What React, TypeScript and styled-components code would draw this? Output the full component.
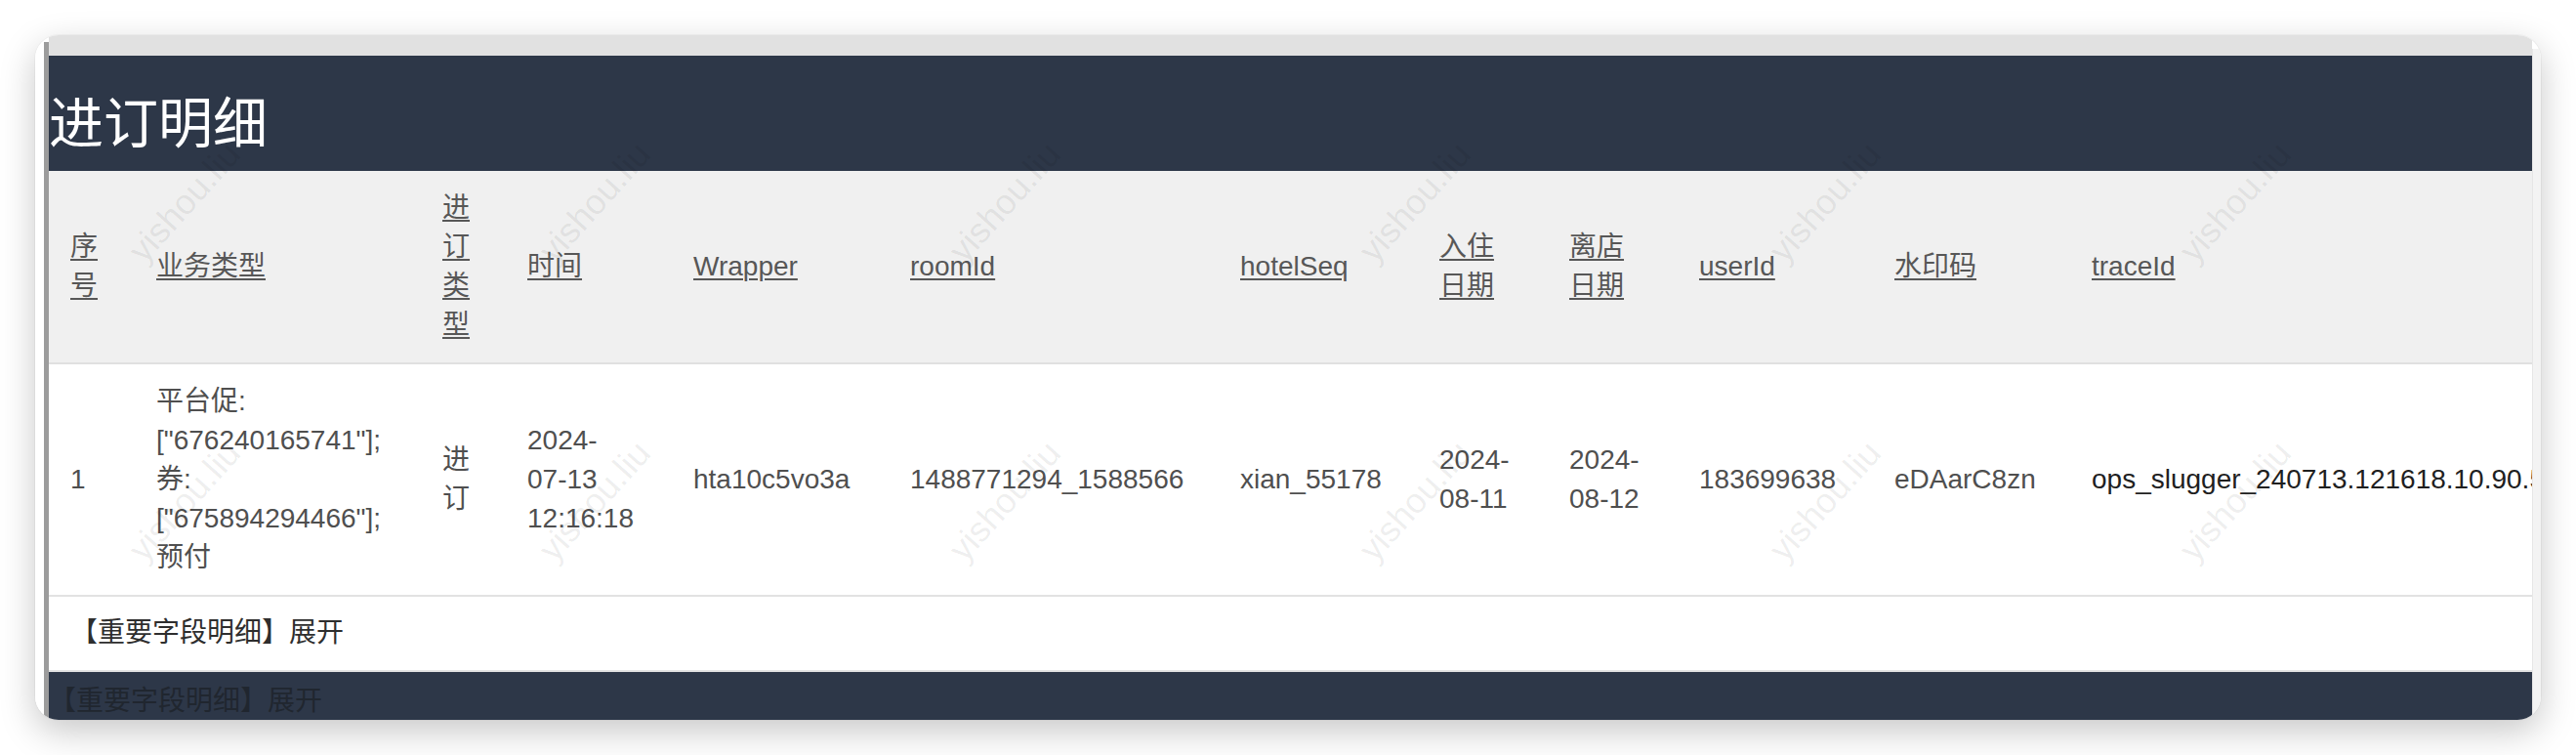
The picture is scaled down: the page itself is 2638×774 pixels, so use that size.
import React from 'react';
import styled, { createGlobalStyle } from 'styled-components';

const GlobalStyle = createGlobalStyle`
  html, body {
    margin: 0;
    padding: 0;
    background: #ffffff;
  }
  body {
    font-family: 'Liberation Sans', 'Noto Sans CJK SC', sans-serif;
  }
`;

type Column = {
    key: string;
    width: number;
    title: string[];
};

const columns: Column[] = [
    { key: 'seq', width: 80, title: ['序', '号'] },
    { key: 'bizType', width: 293, title: ['业务类型'] },
    { key: 'orderType', width: 87, title: ['进', '订', '类', '型'] },
    { key: 'time', width: 170, title: ['时间'] },
    { key: 'wrapper', width: 222, title: ['Wrapper'] },
    { key: 'roomId', width: 338, title: ['roomId'] },
    { key: 'hotelSeq', width: 204, title: ['hotelSeq'] },
    { key: 'checkIn', width: 133, title: ['入住', '日期'] },
    { key: 'checkOut', width: 133, title: ['离店', '日期'] },
    { key: 'userId', width: 200, title: ['userId'] },
    { key: 'watermark', width: 202, title: ['水印码'] },
    { key: 'traceId', width: 720, title: ['traceId'] },
];

const row: Record<string, string[]> = {
    seq: ['1'],
    bizType: ['平台促:', '["676240165741"];', '券:', '["675894294466"];', '预付'],
    orderType: ['进', '订'],
    time: ['2024-', '07-13', '12:16:18'],
    wrapper: ['hta10c5vo3a'],
    roomId: ['1488771294_1588566'],
    hotelSeq: ['xian_55178'],
    checkIn: ['2024-', '08-11'],
    checkOut: ['2024-', '08-12'],
    userId: ['183699638'],
    watermark: ['eDAarC8zn'],
    traceId: ['ops_slugger_240713.121618.10.90.5'],
};

// watermark grid, centers relative to the content column
const marks: { x: number; y: number }[] = [];
for (let r = 0; r < 2; r++) {
    for (let c = 0; c < 6; c++) {
        marks.push({ x: 139 + c * 420, y: 171 + r * 306 });
    }
}

const lines = (items: string[]) =>
    items.map((t, i) => (
        <React.Fragment key={i}>
            {i > 0 && <br />}
            {t}
        </React.Fragment>
    ));

const App = () => {
    const tableWidth = columns.reduce((s, c) => s + c.width, 0);
    return (
        <>
            <GlobalStyle />
            <Stage>
                <Window>
                    <LeftRail />
                    <Main>
                        <TopStrip />
                        <TitleBand>
                            <Title>进订明细</Title>
                        </TitleBand>
                        <Table $width={tableWidth}>
                            <colgroup>
                                {columns.map(c => (
                                    <Col key={c.key} $w={c.width} />
                                ))}
                            </colgroup>
                            <thead>
                                <tr>
                                    {columns.map(c => (
                                        <Th key={c.key}>
                                            <SortLink href="#">{lines(c.title)}</SortLink>
                                        </Th>
                                    ))}
                                </tr>
                            </thead>
                            <tbody>
                                <tr>
                                    {columns.map(c => (
                                        <Td key={c.key} $dark={c.key === 'traceId'}>
                                            {lines(row[c.key])}
                                        </Td>
                                    ))}
                                </tr>
                            </tbody>
                        </Table>
                        <ExpandRow>【重要字段明细】展开</ExpandRow>
                        <Footer>
                            <FooterText>【重要字段明细】展开</FooterText>
                        </Footer>
                        <Watermarks>
                            {marks.map((m, i) => (
                                <Mark key={i} style={{ left: m.x, top: m.y }}>
                                    yishou.liu
                                </Mark>
                            ))}
                        </Watermarks>
                    </Main>
                    <RightRail />
                </Window>
            </Stage>
        </>
    );
};

export default App;

const Stage = styled.div`
    padding: 36px;
    width: 2638px;
    box-sizing: border-box;
`;

const Window = styled.div`
    display: flex;
    width: 2566px;
    border-radius: 24px;
    overflow: hidden;
    background: #ffffff;
    box-shadow: 0 12px 36px rgba(0, 0, 0, 0.22), 0 0 0 1px rgba(0, 0, 0, 0.03);
`;

const LeftRail = styled.div`
    flex: 0 0 9px;
    margin-top: 7px;
    border-right: 5px solid #9c9c9c;
    background: #ffffff;
`;

const RightRail = styled.div`
    flex: 0 0 8px;
    margin-top: 14px;
    background: #f3f3f3;
    border-left: 1px solid #e6e6e6;
`;

const Main = styled.div`
    position: relative;
    flex: 1;
    min-width: 0;
    overflow: hidden;
    display: flex;
    flex-direction: column;
`;

const TopStrip = styled.div`
    height: 21px;
    background: #e1e1e1;
`;

const TitleBand = styled.div`
    background: #2d3748;
    height: 118px;
    box-sizing: border-box;
    padding-top: 42px;
`;

const Title = styled.h3`
    margin: 0;
    font-size: 56px;
    line-height: 56px;
    font-weight: 400;
    color: #ffffff;
    white-space: nowrap;
`;

const Table = styled.table<{ $width: number }>`
    width: ${p => p.$width}px;
    table-layout: fixed;
    border-collapse: collapse;
    font-size: 28px;
    line-height: 40px;
    color: #4f4f4f;
`;

const Col = styled.col<{ $w: number }>`
    width: ${p => p.$w}px;
`;

const Th = styled.th`
    background: #f0f0f0;
    border-bottom: 2px solid #e0e0e0;
    padding: 18px 30px;
    text-align: left;
    vertical-align: middle;
    font-weight: 400;
    white-space: nowrap;

    &:first-child {
        padding-left: 22px;
    }
`;

const SortLink = styled.a`
    color: #575757;
    text-decoration: underline;
    text-decoration-thickness: 2px;
    text-underline-offset: 3px;
`;

const Td = styled.td<{ $dark?: boolean }>`
    padding: 18px 30px;
    border-bottom: 2px solid #e2e2e2;
    vertical-align: middle;
    white-space: nowrap;
    color: ${p => (p.$dark ? '#1f1f1f' : '#4f4f4f')};

    &:first-child {
        padding-left: 22px;
    }
`;

const ExpandRow = styled.div`
    padding: 17px 22px 18px;
    font-size: 28px;
    line-height: 40px;
    color: #2e2e2e;
    border-bottom: 2px solid #e2e2e2;
    white-space: nowrap;
`;

const Footer = styled.div`
    background: #2d3748;
    height: 49px;
    box-sizing: border-box;
    padding-top: 10px;
`;

const FooterText = styled.div`
    font-size: 28px;
    line-height: 40px;
    color: #20262f;
    white-space: nowrap;
`;

const Watermarks = styled.div`
    position: absolute;
    inset: 0;
    pointer-events: none;
`;

const Mark = styled.span`
    position: absolute;
    transform: translate(-50%, -50%) rotate(-48deg);
    font-family: 'Liberation Sans', sans-serif;
    font-size: 36px;
    color: rgba(0, 0, 0, 0.08);
    white-space: nowrap;
`;
